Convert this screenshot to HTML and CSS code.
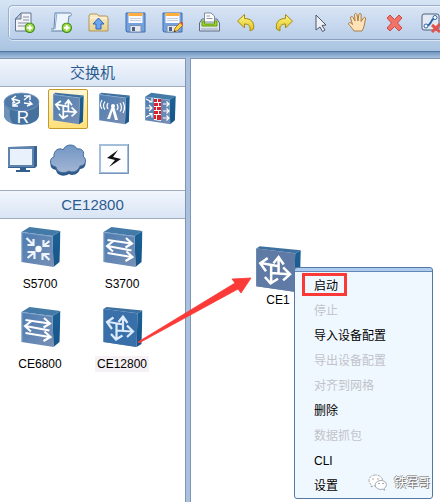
FILE: index.html
```html
<!DOCTYPE html>
<html lang="zh-CN">
<head>
    <meta charset="UTF-8">
    <meta name="viewport" content="width=device-width, initial-scale=1.0">
    <title>CE12800</title>
    <link rel="stylesheet" href="styles.css">
</head>
<body>
    <!-- shared icon shapes -->
    <svg class="defs" width="0" height="0" aria-hidden="true">
        <defs>
            <linearGradient id="face" x1="0" y1="0" x2="1" y2="1">
                <stop offset="0" stop-color="#4c7cb0"/>
                <stop offset="1" stop-color="#7890b6"/>
            </linearGradient>
            <linearGradient id="side" x1="0" y1="0" x2="0" y2="1">
                <stop offset="0" stop-color="#1c6296"/>
                <stop offset="1" stop-color="#17548a"/>
            </linearGradient>
            <linearGradient id="yellow" x1="0" y1="0" x2="0" y2="1">
                <stop offset="0" stop-color="#fff78a"/>
                <stop offset="1" stop-color="#e0c21c"/>
            </linearGradient>
            <linearGradient id="folder" x1="0" y1="0" x2="0" y2="1">
                <stop offset="0" stop-color="#fbeecb"/>
                <stop offset="1" stop-color="#e6cf8e"/>
            </linearGradient>
            <linearGradient id="cloud" x1="0" y1="0" x2="0" y2="1">
                <stop offset="0" stop-color="#7196c4"/>
                <stop offset="1" stop-color="#a4b5d4"/>
            </linearGradient>
        </defs>
        <symbol id="box" viewBox="0 0 40 42">
            <path d="M1 3 4 1 40 4.500 35 7.500z" fill="#3d6f9f"/>
            <path d="M35 7.500 40 4.500 39 38 34 41z" fill="url(#side)"/>
            <path d="M1 3 35 7.500 34 41 1 36z" fill="url(#face)"/>
            <path d="M1.500 36V3.500L35 7.500" fill="none" stroke="#8fb0d4" stroke-width=".7"/>
        </symbol>
        <symbol id="deepbox" viewBox="0 0 40 42">
            <path d="M1 6 9 1 40 5 32 10z" fill="#447aa8"/>
            <path d="M32 10 40 5 39 36 33 41z" fill="url(#side)"/>
            <path d="M1 6 32 10 33 41 1 36z" fill="url(#face)"/>
            <path d="M1.500 36V6.500L32 10.500" fill="none" stroke="#8fb0d4" stroke-width=".7"/>
        </symbol>
        <symbol id="cross" viewBox="0 0 40 42">
            <path d="M20.500 25V11M16 16l4.500-5.500L25 17M14 18v15M8.500 28l5 5.500 6.500-4M20.500 18.500 6 16M11 11.500 4.500 16l5 7M14 24.500l15.500 1M24.500 19.500l6 6-6 5.500" fill="none" stroke="currentColor" stroke-width="2.200"/>
        </symbol>
        <symbol id="lines" viewBox="0 0 40 42">
            <path d="M5 14l24 3.500M23.500 12l6 5.500-6.500 4M29 24.500 5 20M11 15l-6.500 5 6 5.500M5 27l24 4M24 25.500l6 5.500-7 4" fill="none" stroke="#fff" stroke-width="2.100"/>
        </symbol>
        <symbol id="converge" viewBox="0 0 40 42">
            <circle cx="18" cy="23" r="3.200" fill="#fff"/>
            <path d="M6 12l7 7M13 13v6H7M29 15l-6 5M23 14v6h6M7 32l6-5M7 26h7v7M29 34l-6-6M22 34v-6h7" fill="none" stroke="#eef4fb" stroke-width="2.200"/>
        </symbol>
        <symbol id="plus" viewBox="0 0 10 10">
            <circle cx="5" cy="5" r="4.500" fill="#9bd843" stroke="#3d8a14"/>
            <path d="M5 2.300v5.400M2.300 5h5.400" stroke="#fff" stroke-width="1.700"/>
        </symbol>
        <symbol id="floppy" viewBox="0 0 21 21">
            <path d="M1 1h19v19H2l-1-1z" fill="#72a3e0" stroke="#3f6cae"/>
            <path d="M3.500 1h14v10h-14z" fill="#f7f9fc"/>
            <path d="M3.500 1h14v3h-14z" fill="#ffae3d"/>
            <path d="M5 6.500h11M5 8.500h11" stroke="#c3cddb"/>
            <path d="M5 13.500h11V20H5z" fill="#e5e7eb" stroke="#7990b3"/>
            <path d="M7 15h3v4H7z" fill="#4a6288"/>
        </symbol>
        <symbol id="undo" viewBox="0 0 21 21">
            <path d="M1.500 9 8.500 2.500v4c7 0 10 4 9 10.500l-3.500 2c.5-5-1-7-5.500-7v4z" fill="url(#yellow)" stroke="#a88a10" stroke-linejoin="round"/>
        </symbol>
    </svg>

    <header class="topbar">
        <div class="toolbar" role="toolbar">
            <button type="button" aria-label="新建拓扑">
                <svg viewBox="0 0 21 21">
                    <path d="M7 1h10v18H1.500V7z" fill="#f1f3f7" stroke="#5f7392"/>
                    <path d="M7 1v6H1.500z" fill="#c6ccd7" stroke="#5f7392"/>
                    <path d="M9 5h6M9 8h6M4 11h11M4 14h7" stroke="#aab2c0" stroke-width="1.500"/>
                    <use href="#plus" x="10.500" y="10.500" width="10.500" height="10.500"/>
                </svg>
            </button>
            <button type="button" aria-label="新建试卷">
                <svg viewBox="0 0 21 21">
                    <path d="M4 1h15c2 0 2 3 0 3h-1l-2 15H1c-2 0-2-2 0-2h2z" fill="#edf5fc" stroke="#6484ad"/>
                    <path d="M4 1c2 0 2 1.500 1.500 3L4 17M1 19h14" fill="none" stroke="#8fa9c9"/>
                    <use href="#plus" x="10.500" y="10.500" width="10.500" height="10.500"/>
                </svg>
            </button>
            <button type="button" aria-label="打开">
                <svg viewBox="0 0 21 21">
                    <path d="M1 4q0-2 2-2h6l2 2h7q2 0 2 2v13H1z" fill="url(#folder)" stroke="#b3965a"/>
                    <path d="M2 6h17" stroke="#fff8e5"/>
                    <path d="m10.500 6 5.500 6h-3v5H8v-5H5z" fill="#6aa6f2" stroke="#2f66b8"/>
                </svg>
            </button>
            <button type="button" aria-label="保存">
                <svg viewBox="0 0 21 21"><use href="#floppy"/></svg>
            </button>
            <button type="button" aria-label="另存为">
                <svg viewBox="0 0 21 21">
                    <use href="#floppy"/>
                    <path d="m12 20 1-4 6-6 2.500 2.500-6 6z" fill="#ffcf45" stroke="#9a6414" stroke-width=".8"/>
                    <path d="m18 11 1.500-1.500L22 12l-1.500 1.500z" fill="#d9513c"/>
                    <path d="m12 20 .5-2 1.500 1.500z" fill="#333"/>
                </svg>
            </button>
            <button type="button" aria-label="打印">
                <svg viewBox="0 0 21 21">
                    <path d="M3 7h15l2.500 4v8H.5v-8z" fill="#dfe4ec" stroke="#5c6c85"/>
                    <path d="M5.500 10V1H12l3.500 3v6z" fill="#fff" stroke="#7e8ca3"/>
                    <path d="M7.500 4H11M7.500 6.500h6" stroke="#8e99aa"/>
                    <path d="M3 9h2.500v3h10V9H18v5H3z" fill="#a1d729" stroke="#5f9911"/>
                    <path d="M2 17h17" stroke="#9aa8bd"/>
                </svg>
            </button>
            <button type="button" aria-label="撤销">
                <svg viewBox="0 0 21 21"><use href="#undo"/></svg>
            </button>
            <button type="button" aria-label="恢复">
                <svg class="flip" viewBox="0 0 21 21"><use href="#undo"/></svg>
            </button>
            <button type="button" aria-label="选择">
                <svg viewBox="0 0 21 21">
                    <path d="m6 3 10 10-4 .5 3 4.500-2.500 1.500L10 15l-4 3z" fill="#eef0f4" stroke="#4d566c" stroke-linejoin="round"/>
                </svg>
            </button>
            <button type="button" aria-label="拖动">
                <svg viewBox="0 0 21 21">
                    <path d="M7 19c-2-3-4-5-5.500-7 0-2 2-2 4 .5L3.500 6c0-2 2-2 2.500-.5L8 9 7.500 3c0-2 2.500-2 2.500 0l1 6 .8-6.500c.3-1.500 2.500-1.500 2.400.5L14 9.500 16.500 6c1-1.500 2.500-.5 2 1-1 4-1 8-3.500 12z" fill="#ffe2b5" stroke="#a77f4a" stroke-linejoin="round"/>
                </svg>
            </button>
            <button type="button" aria-label="删除">
                <svg viewBox="0 0 21 21">
                    <path d="m3 6 3-3 4.500 4.500L15 3l3 3-4.500 5 4.500 5-3 3-4.500-4.500L6 19l-3-3 4.500-5z" fill="#f27268" stroke="#c94a45" stroke-linejoin="round"/>
                </svg>
            </button>
            <button type="button" aria-label="删除连线">
                <svg viewBox="0 0 21 21">
                    <rect x="1" y="2" width="17" height="16" rx="2" fill="#e4eaf3" stroke="#4f607b"/>
                    <path d="M5 14q4-1 5-4t4-4" fill="none" stroke="#2c66aa" stroke-width="2"/>
                    <circle cx="5" cy="14" r="2" fill="#fff" stroke="#2c66aa"/>
                    <circle cx="14" cy="5.500" r="2" fill="#fff" stroke="#2c66aa"/>
                    <path d="m11 13 8 7M19 12l-8 8" stroke="#e0544d" stroke-width="3"/>
                </svg>
            </button>
        </div>
    </header>

    <main class="workspace">
        <aside class="sidebar">
            <h2>交换机</h2>
            <div class="categories">
                <button type="button" aria-label="路由器">
                    <svg viewBox="0 0 40 40">
                        <path d="M2 14v12c0 13 35 13 35 0V14z" fill="#45719e"/>
                        <path d="M2 16v10c0 4 4 7 9 9-3-5-4-9-3-14z" fill="#6e92b8"/>
                        <ellipse cx="19.500" cy="13" rx="17.500" ry="9" fill="#4f79a8" stroke="#7696bb" stroke-width=".8"/>
                        <path d="m11 10 7 2M14 7l-4 3 3 4M18 13l-6 3M11 13v4h5M22 11l5-4M22 7h6v4M22 14l7 1M27 12l3 3-5 2" fill="none" stroke="#fff" stroke-width="1.400"/>
                        <text class="router-letter" x="21" y="34">R</text>
                    </svg>
                </button>
                <button type="button" class="selected" aria-label="交换机">
                    <svg viewBox="0 0 40 40"><use href="#box" x="4" y="3" width="32" height="33"/><use href="#cross" x="4" y="3" width="32" height="33"/></svg>
                </button>
                <button type="button" aria-label="无线局域网">
                    <svg viewBox="0 0 40 40">
                        <use href="#box" x="4" y="3" width="32" height="33"/>
                        <path d="m18 17-5 13h3l2.500-8 2.500 9h3l-4-14z" fill="#fff"/>
                        <circle cx="19" cy="17" r="2" fill="#fff"/>
                        <path d="M14 14q-2 3 0 6M11 12.500q-3 4.500 0 8M8 11q-3 5 0 9M23 15q2 3 0 6M26 14q3 4.500 0 8.500M29 13q3 5.500 0 11" fill="none" stroke="#fff" stroke-width="1.200"/>
                    </svg>
                </button>
                <button type="button" aria-label="防火墙">
                    <svg viewBox="0 0 40 40">
                        <use href="#deepbox" x="4" y="3" width="32" height="33"/>
                        <path d="m14 9 7 1v22l-7-1z" fill="#fff"/>
                        <path d="M14 10h3v3h-3zM18 10h3v3h-3zM14 14h4v3h-4zM19 14h2v3h-2zM14 18h2v3h-2zM17 18h4v3h-4zM14 22h4v3h-4zM19 22h2v3h-2zM14 26h2v4h-2zM17 26h4v5h-4z" fill="#d9202b"/>
                        <path d="m6 10 6 3M12 9v4H9M6 19h6M9 16l3 3-3 3M6 28l6-3M9 24.500h3v4M23 15h6M26.500 12.500 29 15l-2.500 2.500M23 22h6M26.500 19.500 29 22l-2.500 2.500M23 29h6M26.500 26.500 29 29l-2.500 2.500" fill="none" stroke="#fff" stroke-width="1.200"/>
                    </svg>
                </button>
                <button type="button" aria-label="终端">
                    <svg viewBox="0 0 40 40">
                        <path d="m6 8 29-1v20l-2 2H6z" fill="#366192"/>
                        <path d="M6 8h26v20H6z" fill="#5d83ae"/>
                        <path d="M8 10h22v16H8z" fill="#e9f1fc"/>
                        <path d="M18 28h6v3h4v2H14v-2h4z" fill="#315f8e"/>
                    </svg>
                </button>
                <button type="button" aria-label="其他设备">
                    <svg viewBox="0 0 40 40">
                        <path d="M8 29c-7-1-7-9-2-10-1-7 6-10 9-7 3-7 12-6 14-1 5-1 8 3 6 7 5 4 2 10-3 10-2 6-8 7-11 5-5 3-12 2-13-4z" transform="translate(0 2)" fill="#2d5a88"/>
                        <path d="M8 28c-7-1-7-9-2-10-1-7 6-10 9-7 3-7 12-6 14-1 5-1 8 3 6 7 5 4 2 10-3 10-2 6-8 7-11 5-5 3-12 2-13-4z" fill="url(#cloud)" stroke="#426f9e"/>
                    </svg>
                </button>
                <button type="button" aria-label="设备连线">
                    <svg viewBox="0 0 40 40">
                        <path d="M6 6h28v28H6z" fill="#fcfdff" stroke="#a4bddb" stroke-width="2"/>
                        <path d="M5 34.500h29.500V5" fill="none" stroke="#7894b9"/>
                        <path d="m24 11-11 8 8 2-6 7 12-8-8-2z" fill="#111"/>
                    </svg>
                </button>
            </div>

            <h2>CE12800</h2>
            <div class="devices">
                <button type="button">
                    <svg viewBox="0 0 40 42"><use href="#deepbox"/><use href="#converge"/></svg>
                    <span>S5700</span>
                </button>
                <button type="button">
                    <svg viewBox="0 0 40 42"><use href="#deepbox"/><use href="#lines"/></svg>
                    <span>S3700</span>
                </button>
                <button type="button">
                    <svg viewBox="0 0 40 42"><use href="#deepbox"/><use href="#lines"/></svg>
                    <span>CE6800</span>
                </button>
                <button type="button" class="picked">
                    <svg viewBox="0 0 40 42"><use href="#box"/><path d="M1 3 35 7.500 34 41 1 36z" fill="#3a70aa"/><use href="#cross"/></svg>
                    <span>CE12800</span>
                </button>
            </div>
        </aside>

        <section class="canvas">
            <div class="node">
                <svg viewBox="0 0 40 42"><use href="#box"/><path d="M1 3 35 7.500 34 41 1 36z" fill="#5f7ba5"/><use href="#cross"/></svg>
                <span>CE1</span>
            </div>

            <div class="context-menu" role="menu">
                <button type="button" role="menuitem">启动</button>
                <button type="button" role="menuitem" disabled>停止</button>
                <button type="button" role="menuitem">导入设备配置</button>
                <button type="button" role="menuitem" disabled>导出设备配置</button>
                <button type="button" role="menuitem" disabled>对齐到网格</button>
                <button type="button" role="menuitem">删除</button>
                <button type="button" role="menuitem" disabled>数据抓包</button>
                <button type="button" role="menuitem">CLI</button>
                <button type="button" role="menuitem">设置</button>
                <span class="highlight"></span>
            </div>

            <div class="watermark">
                <svg viewBox="0 0 20 17">
                    <path d="M7.500 1C3.500 1 1 3.500 1 6.500c0 2 1 3.500 2.500 4.500L3 13l2.500-1.300c4 1 9-1 9-5.200C14.500 3.500 11.500 1 7.500 1z" fill="#fff" stroke="#8f959c" stroke-width=".8" stroke-dasharray="3 1"/>
                    <path d="M13 6.500c-3.500 0-5.800 2-5.800 4.500 0 3 3.500 5 7.500 4.200l2 1-.4-1.800C20.500 11 18 6.500 13 6.500z" fill="#fff" stroke="#8f959c" stroke-width=".8"/>
                    <path d="M5 4.500v1M10 4.500v1M11 9v1M15 9v1" stroke="#777" stroke-width="1.200"/>
                </svg>
                <span>铁军哥</span>
            </div>
        </section>

        <svg class="pointer" viewBox="0 0 114 66" aria-hidden="true">
            <path d="M0 65 97 6 94 2 113 1 103 16 100 12 1 66z" fill="#fb3a38" stroke="#fb3a38" stroke-width=".8"/>
        </svg>
    </main>
</body>
</html>
```

FILE: styles.css
```css
* {
    box-sizing: border-box;
}
body {
    display: flex;
    flex-direction: column;
    min-height: 100vh;
    margin: 0;
    overflow: hidden;
    background-color: #a9c1df;
    font-family: "Liberation Sans", "Noto Sans CJK SC", sans-serif;
    font-size: 12px;
    color: #000;
}
button {
    padding: 0;
    border: 0;
    background: none;
    color: inherit;
    font: inherit;
    cursor: pointer;
}
svg {
    display: block;
}
.defs {
    position: absolute;
}

/* toolbar */
.topbar {
    flex: none;
    height: 52px;
    padding: 5px 0 0 8px;
    border-bottom: 1px solid #56779c;
    background: linear-gradient(#d6e5f5, #a9c4e2);
}
.toolbar {
    display: flex;
    align-items: center;
    gap: 16px;
    height: 35px;
    padding-left: 5px;
    border: 1px solid #9caecb;
    border-right: 0;
    border-bottom-color: #8c9fbe;
    border-radius: 5px 0 0 5px;
    background: linear-gradient(#d9e5f5, #b9cee9);
    box-shadow: inset 1px 1px 0 #edf4fc, 0 1px 0 #d7e5f5;
    overflow: hidden;
}
.toolbar button {
    flex: none;
    width: 21px;
}
.toolbar svg {
    width: 21px;
    height: 21px;
}
.toolbar .flip {
    transform: scaleX(-1);
}

/* panels */
.workspace {
    position: relative;
    display: flex;
    flex: 1;
    gap: 4px;
    padding-top: 6px;
    background: linear-gradient(#6f97c0, #a9c1df 6px);
}
.sidebar {
    flex: none;
    width: 186px;
    border-top: 1px solid #8499b8;
    border-right: 1px solid #7f96b5;
    background-color: #fff;
}
.sidebar h2 {
    height: 28px;
    margin: 0;
    border-bottom: 1px solid #9fabbf;
    background: linear-gradient(#f2f6fd, #d9e4f4);
    color: #2b5c90;
    font-size: 15px;
    font-weight: normal;
    line-height: 27px;
    text-align: center;
}
.categories {
    display: grid;
    grid-template-columns: repeat(4, 40px);
    gap: 10px 6px;
    padding: 2px 2px 11px;
    border-bottom: 1px solid #9fabbf;
}
.categories button {
    height: 40px;
    color: #fff;
}
.categories svg {
    width: 40px;
    height: 40px;
}
.categories .selected {
    border: 1px solid #c79a28;
    border-radius: 2px;
    background: linear-gradient(#fff6d6, #ffe07a);
}
.categories .selected svg {
    margin: -1px;
}
.router-letter {
    fill: #fff;
    font-size: 17px;
    text-anchor: middle;
}
.devices {
    display: grid;
    grid-template-columns: repeat(2, 80px);
    gap: 14px 2px;
    padding-top: 7px;
}
.devices button {
    display: flex;
    flex-direction: column;
    align-items: center;
    gap: 8px;
}
.devices svg {
    width: 41px;
    height: 42px;
    color: #dcebfb;
}
.devices span {
    padding: 0 2px;
    line-height: 16px;
}
.devices .picked span {
    background-color: #f5f1f4;
}

/* topology */
.canvas {
    position: relative;
    flex: 1;
    border-top: 1px solid #7f96b5;
    border-left: 1px solid #7f96b5;
    background-color: #fff;
}
.node {
    position: absolute;
    top: 186px;
    left: 64px;
    display: flex;
    flex-direction: column;
    align-items: center;
}
.node svg {
    width: 46px;
    height: 48px;
    color: #fff;
}
.node span {
    line-height: 14px;
}
.context-menu {
    position: absolute;
    top: 208px;
    left: 103px;
    display: flex;
    flex-direction: column;
    width: 139px;
    padding-top: 5px;
    border: 1px solid #5579a3;
    border-radius: 3px;
    background: linear-gradient(#aecbf0 3px, #6689b4 3px, #6689b4 4px, #f0f8ff 4px);
}
.context-menu button {
    height: 25px;
    padding-left: 19px;
    line-height: 26px;
    text-align: left;
}
.context-menu button:disabled {
    color: #c1c3c9;
    cursor: default;
}
.highlight {
    position: absolute;
    top: 5px;
    left: 7px;
    width: 45px;
    height: 23px;
    border: 3px solid #fb3a38;
    pointer-events: none;
}
.watermark {
    position: absolute;
    top: 415px;
    left: 177px;
    display: flex;
    align-items: center;
    gap: 6px;
    color: #fff;
    line-height: 16px;
    text-shadow: 1px 1px 0 #777, -1px 0 0 #999, 0 -1px 0 #999;
}
.watermark svg {
    width: 20px;
    height: 17px;
}
.pointer {
    position: absolute;
    top: 225px;
    left: 138px;
    width: 114px;
    height: 66px;
    pointer-events: none;
}
```
